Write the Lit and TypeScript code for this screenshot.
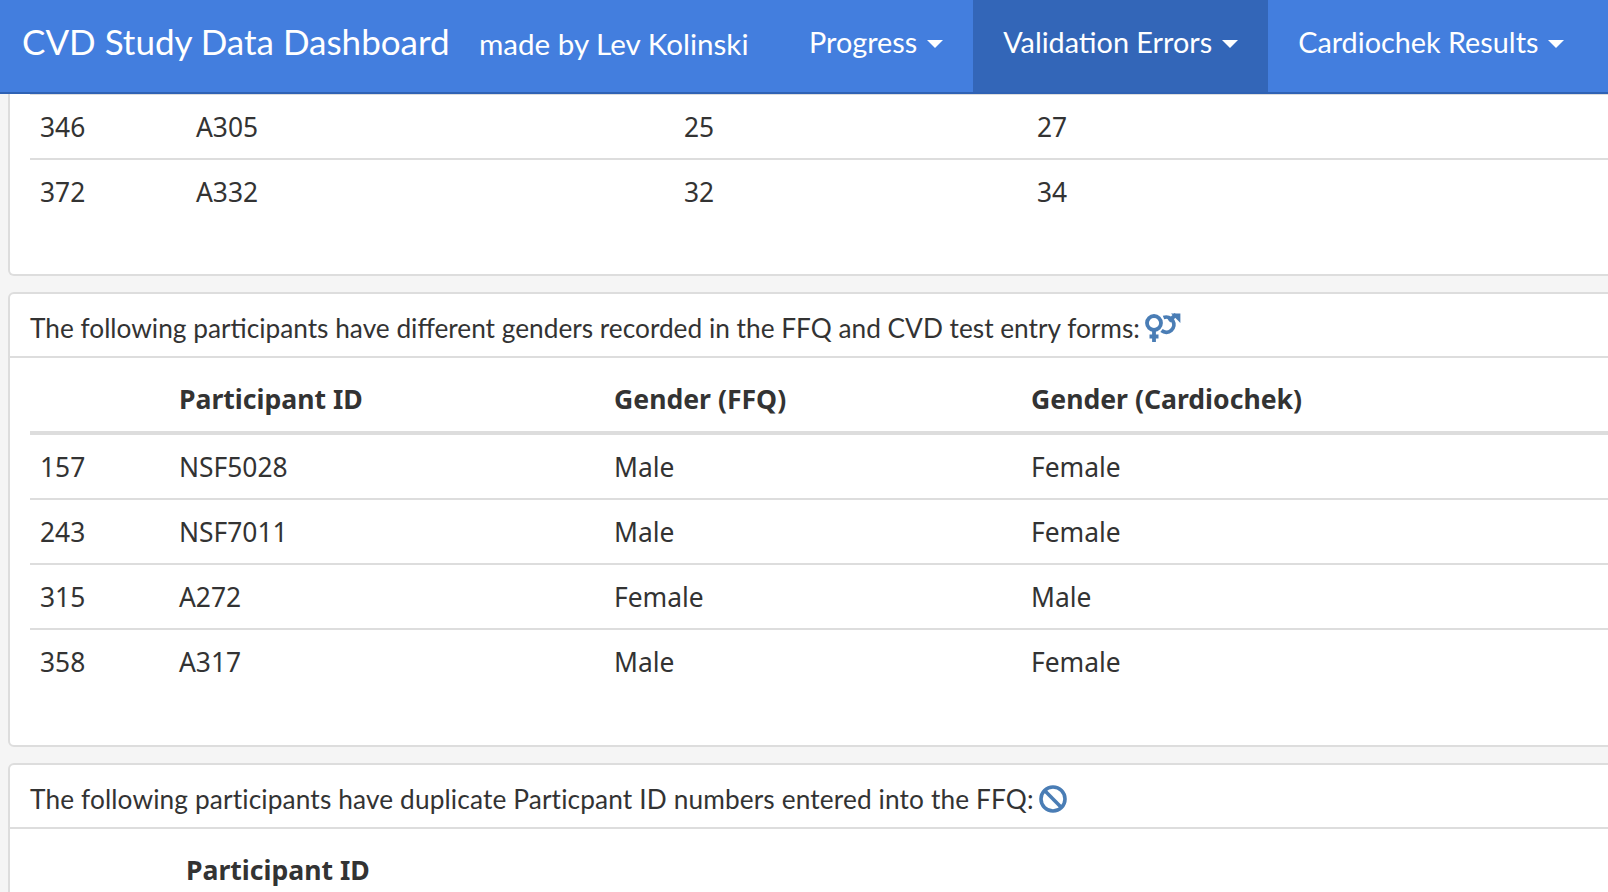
import { LitElement, html, css } from 'lit';
import { customElement } from 'lit/decorators.js';

const venusMars = html`<svg class="icon venus" viewBox="0 0 36 30" width="36" height="30">
  <g fill="none" stroke="#4a7db5" stroke-width="3.8">
    <circle cx="9" cy="10" r="7" />
    <path d="M9 17v12M4.5 23.5h9" />
    <path d="M18.5 4.6a7.6 7.6 0 1 1 -2 13" />
    <path d="M24 8l7-6.5" />
  </g>
  <path d="M26 0.6h9.4v9.4z" fill="#4a7db5" />
</svg>`;

const ban = html`<svg class="icon ban" viewBox="0 0 28 28" width="28" height="28">
  <g fill="none" stroke="#4a7db5" stroke-width="3.6">
    <circle cx="14" cy="14" r="12" />
    <path d="M5.6 5.6l16.8 16.8" />
  </g>
</svg>`;

const genderRows = [
  ['157', 'NSF5028', 'Male', 'Female'],
  ['243', 'NSF7011', 'Male', 'Female'],
  ['315', 'A272', 'Female', 'Male'],
  ['358', 'A317', 'Male', 'Female'],
];

const firstRows = [
  ['346', 'A305', '25', '27'],
  ['372', 'A332', '32', '34'],
];

@customElement('app-root')
export class AppRoot extends LitElement {
  static styles = css`
    :host {
      display: block;
      width: 1608px;
      height: 892px;
      overflow: hidden;
      background: #f5f5f5;
      color: #333;
      font-family: 'Lato', 'Liberation Sans', sans-serif;
      font-size: 26.5px;
    }
    nav {
      display: flex;
      align-items: stretch;
      height: 92px;
      background: #437ede;
      border-bottom: 2px solid #2f62b4;
      color: #fff;
    }
    .brand {
      display: flex;
      align-items: center;
      padding: 0 0 10px 22px;
      font-size: 35px;
      width: 456px;
      box-sizing: border-box;
      white-space: nowrap;
    }
    .by {
      display: flex;
      align-items: center;
      font-size: 29.6px;
      width: 300px;
      padding: 0 0 6px 23px;
      box-sizing: border-box;
      white-space: nowrap;
    }
    .item {
      display: flex;
      align-items: center;
      gap: 10px;
      padding: 0 30px 8px;
      font-size: 28.8px;
      white-space: nowrap;
    }
    .item.first {
      padding-left: 53px;
    }
    .item.active {
      background: #3366b8;
    }
    .caret {
      width: 0;
      height: 0;
      border-left: 8px solid transparent;
      border-right: 8px solid transparent;
      border-top: 8px solid #fff;
      margin-top: 4px;
    }
    .panels {
      display: flex;
      flex-direction: column;
      gap: 16px;
      padding-left: 8px;
      width: 1800px;
    }
    .panel {
      background: #fff;
      border: 2px solid #ddd;
      border-radius: 6px;
      padding-bottom: 52px;
    }
    .panel.clipped {
      border-top: none;
      border-radius: 0 0 6px 6px;
      padding-bottom: 51px;
      overflow: hidden;
    }
    .panel.clipped table {
      margin-top: -1px;
    }
    .heading {
      display: flex;
      align-items: center;
      height: 64px;
      padding: 6px 0 0 20px;
      box-sizing: border-box;
      border-bottom: 2px solid #ddd;
      font-size: 26.25px;
      white-space: nowrap;
    }
    .heading.dup {
      letter-spacing: 0.13px;
    }
    .icon {
      margin-left: 5px;
    }
    table {
      margin-left: 20px;
      width: 1770px;
      table-layout: fixed;
      border-collapse: collapse;
      font-family: 'Noto Sans', 'Lato', sans-serif;
      font-size: 26.4px;
    }
    th,
    td {
      text-align: left;
      padding: 0 0 0 10px;
      white-space: nowrap;
    }
    th {
      font-weight: 700;
      font-size: 26.6px;
      height: 75px;
      padding-top: 9px;
      box-sizing: border-box;
      border-bottom: 4px solid #ddd;
    }
    td {
      height: 63px;
      border-top: 2px solid #ddd;
    }
    thead + tbody tr:first-child td {
      border-top: none;
    }
  `;

  render() {
    return html`
      <nav>
        <div class="brand">CVD Study Data Dashboard</div>
        <div class="by">made by Lev Kolinski</div>
        <div class="item first">Progress <span class="caret"></span></div>
        <div class="item active">Validation Errors <span class="caret"></span></div>
        <div class="item">Cardiochek Results <span class="caret"></span></div>
      </nav>
      <div class="panels">
        <section class="panel clipped">
          <table>
            <colgroup><col style="width:156px" /><col style="width:488px" /><col style="width:353px" /><col /></colgroup>
            <tbody>
              ${firstRows.map((r) => html`<tr>${r.map((c) => html`<td>${c}</td>`)}</tr>`)}
            </tbody>
          </table>
        </section>
        <section class="panel">
          <div class="heading">The following participants have different genders recorded in the FFQ and CVD test entry forms: ${venusMars}</div>
          <table>
            <colgroup><col style="width:139px" /><col style="width:435px" /><col style="width:417px" /><col /></colgroup>
            <thead>
              <tr><th></th><th>Participant ID</th><th>Gender (FFQ)</th><th>Gender (Cardiochek)</th></tr>
            </thead>
            <tbody>
              ${genderRows.map((r) => html`<tr>${r.map((c) => html`<td>${c}</td>`)}</tr>`)}
            </tbody>
          </table>
        </section>
        <section class="panel">
          <div class="heading dup">The following participants have duplicate Particpant ID numbers entered into the FFQ: ${ban}</div>
          <table>
            <colgroup><col style="width:146px" /><col /></colgroup>
            <thead>
              <tr><th></th><th>Participant ID</th></tr>
            </thead>
          </table>
        </section>
      </div>
    `;
  }
}
